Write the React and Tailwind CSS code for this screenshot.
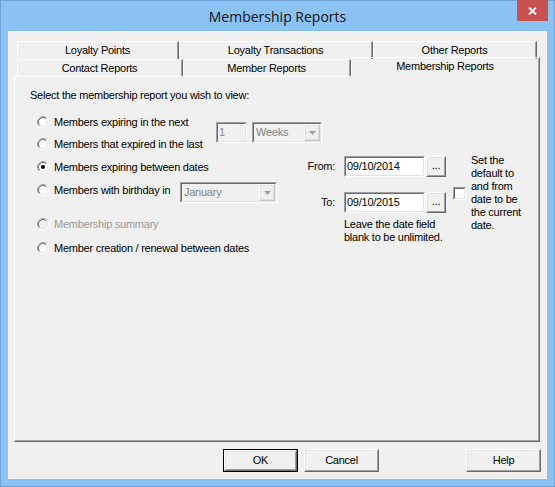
import React from 'react';

function Sunken({ className = '', innerClass = '', children }) {
  return (
    <div className={`border border-t-[#a0a0a0] border-l-[#a0a0a0] border-b-white border-r-white ${className}`}>
      <div className={`h-full border border-t-[#696969] border-l-[#696969] border-b-[#e3e3e3] border-r-[#e3e3e3] ${innerClass}`}>
        {children}
      </div>
    </div>
  );
}

function Raised({ className = '', innerClass = '', children }) {
  return (
    <div className={`border border-t-white border-l-white border-b-[#696969] border-r-[#696969] ${className}`}>
      <div className={`h-full flex items-center justify-center border border-t-[#e3e3e3] border-l-[#e3e3e3] border-b-[#a0a0a0] border-r-[#a0a0a0] ${innerClass}`}>
        {children}
      </div>
    </div>
  );
}

function Radio({ checked, disabled }) {
  return (
    <svg width="12" height="12" viewBox="0 0 12 12" className="shrink-0">
      <circle cx="6" cy="6" r="5" fill={disabled ? '#f0f0f0' : '#ffffff'} />
      <path d="M2.11 9.89 A5.5 5.5 0 0 1 9.89 2.11" fill="none" stroke="#a0a0a0" />
      <path d="M9.89 2.11 A5.5 5.5 0 0 1 2.11 9.89" fill="none" stroke="#ffffff" />
      <path d="M2.82 9.18 A4.5 4.5 0 0 1 9.18 2.82" fill="none" stroke="#696969" />
      <path d="M9.18 2.82 A4.5 4.5 0 0 1 2.82 9.18" fill="none" stroke="#e3e3e3" />
      {checked && <circle cx="6" cy="6" r="2" fill="#000000" />}
    </svg>
  );
}

function RadioRow({ label, checked, disabled, className = '' }) {
  return (
    <div className={`flex items-center h-[20px] gap-[5px] ${className}`}>
      <Radio checked={checked} disabled={disabled} />
      <span className={disabled ? 'text-[#9a9a9a]' : 'text-black'}>{label}</span>
    </div>
  );
}

function Combo({ value, className = '' }) {
  return (
    <Sunken className={`h-[21px] ${className}`} innerClass="flex items-center bg-[#f0f0f0]">
      <span className="flex-1 pl-[2px] text-[#838383]">{value}</span>
      <Raised className="w-[16px] h-[17px] border-b-[#c8c8c8] border-r-[#c8c8c8]" innerClass="border-b-[#dcdcdc] border-r-[#dcdcdc]">
        <svg width="7" height="4" viewBox="0 0 7 4">
          <path d="M0 0 H7 L3.5 4 Z" fill="#a0a0a0" />
        </svg>
      </Raised>
    </Sunken>
  );
}

function Tab({ label, w, selected }) {
  return (
    <div
      className={`${w} border-l border-t border-l-white border-t-white border-r border-r-[#696969] ${
        selected ? 'relative z-10 h-[20px] -mb-px pt-[1px]' : 'h-full'
      }`}
    >
      <div className="h-full border-r border-r-[#a0a0a0] bg-[#f0f0f0] flex justify-center items-center">
        <span className={selected ? '-mt-[3px]' : ''}>{label}</span>
      </div>
    </div>
  );
}

function Button({ label, isDefault, className = '' }) {
  const inner = (
    <Raised className="h-full" innerClass="bg-[#f0f0f0]">
      <span>{label}</span>
    </Raised>
  );
  if (isDefault) {
    return <div className={`h-[23px] w-[75px] border border-black ${className}`}>{inner}</div>;
  }
  return <div className={`h-[23px] w-[75px] ${className}`}>{inner}</div>;
}

function DateField({ label, value }) {
  return (
    <div className="flex items-center h-[21px]">
      <span className="w-[35px] text-right">{label}</span>
      <Sunken className="ml-[9px] w-[81px] h-[21px]" innerClass="bg-white flex items-center pl-[1px]">
        <span>{value}</span>
      </Sunken>
      <Raised className="ml-px w-[20px] h-[21px]" innerClass="bg-[#f0f0f0]">
        <span className="-mt-[3px]">...</span>
      </Raised>
    </div>
  );
}

export default function App() {
  return (
    <div className="w-[555px] h-[487px] bg-[#8ac2f5] border border-[#6fa3d6] flex flex-col font-['Liberation_Sans',Arial,sans-serif] text-[11px] leading-[13px] tracking-[-0.25px] text-black select-none">
      {/* title bar */}
      <div className="relative h-[30px] flex items-center justify-center">
        <span className="font-['Open_Sans',sans-serif] text-[14px] tracking-normal text-[#111] mt-[1px]">
          Membership Reports
        </span>
        <div className="absolute right-[6px] -top-px w-[31px] h-[21px] bg-[#c75050] flex items-center justify-center">
          <svg width="9" height="8" viewBox="0 0 9 8">
            <path d="M1 0.5 L8 7.5 M8 0.5 L1 7.5" stroke="#ffffff" strokeWidth="1.8" />
          </svg>
        </div>
      </div>

      {/* client */}
      <div className="mx-[7px] h-[448px] bg-[#f0f0f0] flex flex-col">
        {/* tabs */}
        <div className="mt-[10px] ml-[9px] flex h-[18px]">
          <Tab label="Loyalty Points" w="w-[162px]" />
          <Tab label="Loyalty Transactions" w="w-[194px]" />
          <Tab label="Other Reports" w="w-[164px]" />
        </div>
        <div className="ml-[9px] flex items-end h-[17px]">
          <Tab label="Contact Reports" w="w-[166px]" />
          <Tab label="Member Reports" w="w-[168px]" />
          <Tab label="Membership Reports" w="w-[189px]" selected />
        </div>

        {/* panel */}
        <div className="ml-[6px] w-[526px] h-[366px] border border-t-white border-l-white border-r-[#696969] border-b-[#696969]">
          <div className="h-full border-r border-b border-r-[#a0a0a0] border-b-[#a0a0a0] pl-[15px] pt-[12px]">
            <div>Select the membership report you wish to view:</div>

            {/* row A */}
            <div className="mt-[10px] flex items-start">
              <div className="w-[186px] pl-[7px] flex flex-col gap-[2px]">
                <RadioRow label="Members expiring in the next" />
                <RadioRow label="Members that expired in the last" />
              </div>
              <Sunken className="mt-[10px] w-[31px] h-[21px]" innerClass="bg-[#f0f0f0] flex items-center pl-[1px]">
                <span className="text-[#838383]">1</span>
              </Sunken>
              <Combo value="Weeks" className="mt-[10px] ml-[5px] w-[70px]" />
            </div>

            {/* row B */}
            <div className="-mt-px flex items-start">
              <div className="w-[270px] pl-[7px] flex flex-col">
                <RadioRow label="Members expiring between dates" checked className="mt-[4px]" />
                <div className="mt-[3px] flex items-start">
                  <RadioRow label="Members with birthday in" className="w-[143px]" />
                  <Combo value="January" className="mt-[2px] w-[97px]" />
                </div>
                <RadioRow label="Membership summary" disabled className="mt-[11px]" />
                <RadioRow label="Member creation / renewal between dates" className="mt-[4px]" />
              </div>

              <div className="flex flex-col">
                <div className="mt-[3px]">
                  <DateField label="From:" value="09/10/2014" />
                </div>
                <div className="mt-[15px]">
                  <DateField label="To:" value="09/10/2015" />
                </div>
                <div className="mt-[5px] pl-[44px]">
                  Leave the date field
                  <br />
                  blank to be unlimited.
                </div>
              </div>

              <Sunken className="ml-[7px] mt-[34px] w-[13px] h-[13px]" innerClass="bg-white" />

              <div className="ml-[5px] mt-px">
                Set the
                <br />
                default to
                <br />
                and from
                <br />
                date to be
                <br />
                the current
                <br />
                date.
              </div>
            </div>
          </div>
        </div>

        {/* buttons */}
        <div className="mt-[7px] flex items-center pr-[6px]">
          <Button label="OK" isDefault className="ml-[215px]" />
          <Button label="Cancel" className="ml-[6px]" />
          <Button label="Help" className="ml-auto" />
        </div>
      </div>
    </div>
  );
}
